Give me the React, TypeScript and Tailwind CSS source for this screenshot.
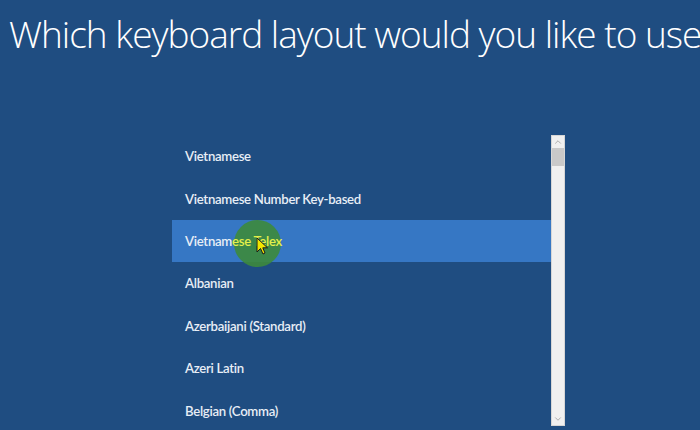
import { ChevronDown, ChevronUp } from "lucide-react";

const layouts = [
  "Vietnamese",
  "Vietnamese Number Key-based",
  "Vietnamese Telex",
  "Albanian",
  "Azerbaijani (Standard)",
  "Azeri Latin",
  "Belgian (Comma)",
];

const SELECTED = "Vietnamese Telex";

const Cursor = () => (
  <svg width="13" height="19" viewBox="0 0 13 19" className="absolute left-[84px] top-[17px]">
    <path
      d="M1 1 L1 15 L4.5 11.5 L7 17 L9 16 L6.8 10.8 L11.5 10.8 Z"
      fill="#f2e600"
      stroke="#1a1a1a"
      strokeWidth="1"
      strokeLinejoin="round"
    />
  </svg>
);

const LayoutRow = ({ name }: { name: string }) => {
  const isSelected = name === SELECTED;

  return (
    <div
      className={`relative flex h-[42.4px] shrink-0 items-center pl-[13px] pt-[2px] text-[13.2px] font-semibold tracking-[-0.3px] text-[#e8eef6] ${
        isSelected ? "bg-[#3677c4]" : ""
      }`}
    >
      {isSelected && (
        <div className="absolute left-[62px] top-[0px] h-[47px] w-[47px] rounded-full bg-[#3d8a3c]/90" />
      )}
      {isSelected ? (
        <span className="relative">
          Vietnam<span className="text-[#e4ef4a]">ese Telex</span>
        </span>
      ) : (
        <span>{name}</span>
      )}
      {isSelected && <Cursor />}
    </div>
  );
};

const App = () => {
  return (
    <div
      className="h-[430px] w-[700px] overflow-hidden bg-[#1f4d81]"
      style={{ fontFamily: 'Lato, "Open Sans", sans-serif' }}
    >
      <h1
        className="mt-[10px] whitespace-nowrap pl-[9px] text-[37px] font-light leading-[48px] tracking-[-1px] text-white"
        style={{ fontFamily: '"Open Sans", sans-serif' }}
      >
        Which keyboard layout would you like to use?
      </h1>

      <div className="mt-[77px] ml-[172px] flex h-[291px]">
        <div className="flex w-[379px] flex-col overflow-hidden">
          {layouts.map((name) => (
            <LayoutRow key={name} name={name} />
          ))}
        </div>
        <div className="flex w-[14px] flex-col items-center border border-[#d6d6d6] bg-[#f0f0f0]">
          <ChevronUp className="mt-[1px] h-[10px] w-[10px] text-[#a0a0a0]" strokeWidth={2} />
          <div className="mt-[1px] h-[18px] w-full bg-[#c9c9c9]" />
          <div className="flex-1" />
          <ChevronDown className="mb-[1px] h-[10px] w-[10px] text-[#a0a0a0]" strokeWidth={2} />
        </div>
      </div>
    </div>
  );
};

export default App;
